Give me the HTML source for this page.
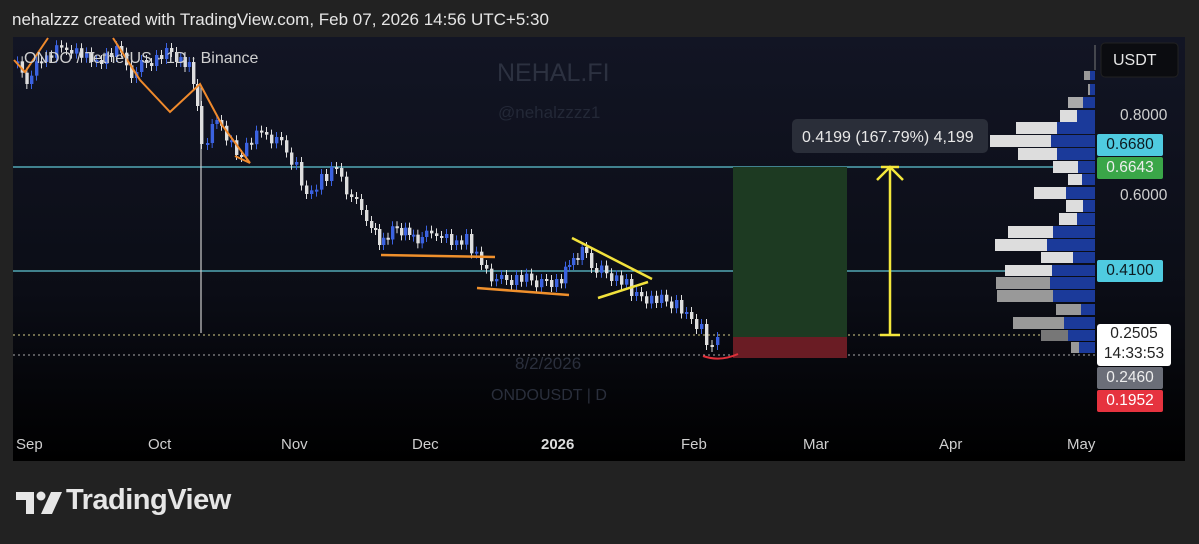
<!DOCTYPE html>
<html><head><meta charset="utf-8"><style>
body{margin:0;width:1199px;height:544px;background:#222222;overflow:hidden;font-family:"Liberation Sans",sans-serif;position:relative}
.hdr{position:absolute;left:12px;top:10px;color:#e6e6e6;font-size:17px}
.chart{position:absolute;left:13px;top:37px;width:1172px;height:424px;background:linear-gradient(#121524 0%,#0b0d16 60%,#000 100%)}
.t{position:absolute;font-size:15px;color:#cfcfcf;top:436px}
.lbl{position:absolute;left:1097px;width:66px;height:22px;font-size:15.5px;line-height:22px;text-align:center;border-radius:2px}
</style></head><body>
<div class="hdr">nehalzzz created with TradingView.com, Feb 07, 2026 14:56 UTC+5:30</div>
<div class="chart"></div>
<svg width="1199" height="544" style="position:absolute;left:0;top:0">
<text x="497" y="81" font-size="25" fill="#2c3140" font-family="Liberation Sans">NEHAL.FI</text>
<text x="498" y="118" font-size="17" fill="#232837" font-family="Liberation Sans">@nehalzzzz1</text>
<text x="515" y="369" font-size="17" fill="#2a2f3c" font-family="Liberation Sans">8/2/2026</text>
<text x="491" y="400" font-size="16" fill="#2a2f3c" font-family="Liberation Sans">ONDOUSDT | D</text>
<line x1="13" y1="167" x2="1095" y2="167" stroke="#5fc6d4" stroke-width="1.3"/>
<line x1="13" y1="271" x2="1095" y2="271" stroke="#5fc6d4" stroke-width="1.3"/>
<line x1="13" y1="335" x2="1095" y2="335" stroke="#d8d08a" stroke-width="1" stroke-dasharray="2,3"/>
<line x1="13" y1="355" x2="1095" y2="355" stroke="#aaa" stroke-width="1" stroke-dasharray="2,3"/>
<line x1="201" y1="85" x2="201" y2="333" stroke="#ccc" stroke-width="1.2"/>
<rect x="733" y="167" width="114" height="170" fill="#1d3a22"/>
<rect x="733" y="337" width="114" height="21" fill="#6a1c24"/>
<g id="candles"></g>
<polyline points="14,60 25,72 48,38" fill="none" stroke="#f08a2c" stroke-width="2"/>
<polyline points="113,38 140,80 170,112 200,84 222,125 250,163 235,156" fill="none" stroke="#f08a2c" stroke-width="2"/>
<line x1="381" y1="255" x2="495" y2="257" stroke="#f0902c" stroke-width="2.5"/>
<line x1="477" y1="288" x2="569" y2="295" stroke="#f0902c" stroke-width="2.5"/>
<line x1="572" y1="238" x2="652" y2="279" stroke="#f2e23c" stroke-width="2.5"/>
<line x1="598" y1="298" x2="648" y2="282" stroke="#f2e23c" stroke-width="2.5"/>
<path d="M703 356 Q720 362 738 354" fill="none" stroke="#e0303a" stroke-width="2"/>
<g stroke="#f4e83c" stroke-width="2.5" fill="none"><line x1="890" y1="169" x2="890" y2="335"/><line x1="880" y1="335" x2="900" y2="335"/><polyline points="877,180 890,167 903,180"/><line x1="881" y1="167" x2="899" y2="167"/></g>
<rect x="792" y="119" width="196" height="34" rx="5" fill="#2a2e39"/>
<text x="802" y="142" font-size="16" fill="#e8e8e8" font-family="Liberation Sans">0.4199 (167.79%) 4,199</text>
<g id="vp"></g>
<line x1="1095" y1="45" x2="1095" y2="70" stroke="#777"/>
<rect x="1101" y="43" width="77" height="34" rx="4" fill="#0b0c10" stroke="#222"/>
<text x="1113" y="65" font-size="16" fill="#e6e6e6" font-family="Liberation Sans">USDT</text>
<text x="1120" y="120" font-size="15.5" fill="#cfcfcf" font-family="Liberation Sans">0.8000</text>
<text x="1120" y="200" font-size="15.5" fill="#cfcfcf" font-family="Liberation Sans">0.6000</text>
<text x="24" y="63" font-size="16" fill="#cfcfcf" font-family="Liberation Sans">ONDO / TetherUS · 1D · Binance</text>
</svg>
<div class="lbl" style="top:134px;background:#4fcbe0;color:#0c1a20">0.6680</div>
<div class="lbl" style="top:157px;background:#3aa648;color:#eee">0.6643</div>
<div class="lbl" style="top:260px;background:#4fcbe0;color:#0c1a20">0.4100</div>
<div class="lbl" style="top:324px;height:42px;width:74px;background:#fff;color:#222;line-height:20px;border-radius:3px">0.2505<br>14:33:53</div>
<div class="lbl" style="top:367px;background:#6b6e78;color:#eee">0.2460</div>
<div class="lbl" style="top:390px;background:#e6333f;color:#fff">0.1952</div>
<div class="t" style="left:16px">Sep</div><div class="t" style="left:148px">Oct</div><div class="t" style="left:281px">Nov</div><div class="t" style="left:412px">Dec</div><div class="t" style="left:541px;font-weight:bold;color:#ddd">2026</div><div class="t" style="left:681px">Feb</div><div class="t" style="left:803px">Mar</div><div class="t" style="left:939px">Apr</div><div class="t" style="left:1067px">May</div>
<svg width="50" height="30" style="position:absolute;left:14px;top:488px"><path d="M2 4h18v22h-8V12H2z" fill="#e6e6e6"/><circle cx="27" cy="8" r="4.5" fill="#e6e6e6"/><path d="M37 4h11l-10 22h-11z" fill="#e6e6e6"/></svg>
<div style="position:absolute;left:66px;top:484px;font-size:29px;font-weight:bold;color:#e6e6e6;letter-spacing:-0.5px">TradingView</div>
<script>
(function(){
var pts=[[16,62],[30,78],[45,62],[70,44],[95,62],[120,52],[135,72],[155,60],[175,52],[192,68],[200,100],[206,150],[220,120],[240,155],[265,132],[280,140],[300,165],[310,200],[325,180],[340,165],[355,200],[370,215],[382,245],[400,228],[412,232],[425,240],[440,230],[455,245],[470,240],[485,262],[500,282],[520,278],[545,282],[560,285],[572,262],[585,250],[595,268],[615,275],[630,285],[640,295],[660,300],[680,303],[690,318],[705,330],[716,348],[722,337]];
var s='',prev=pts[0][1];
for(var i=0;i<pts.length-1;i++){var a=pts[i],b=pts[i+1];var n=Math.max(1,Math.round((b[0]-a[0])/4.6));for(var k=0;k<n;k++){var x=a[0]+(b[0]-a[0])*k/n;var c=a[1]+(b[1]-a[1])*(k+1)/n+((k*7+i*3)%5-2)*3;if(c<40)c=40;var up=c<prev;var ty=Math.min(c,prev),h=Math.max(2,Math.abs(c-prev));var col=up?'#3b62e0':'#dedede';s+='<line x1="'+(x+1.5)+'" y1="'+Math.max(38,ty-5)+'" x2="'+(x+1.5)+'" y2="'+(ty+h+5)+'" stroke="'+col+'" stroke-width="1"/><rect x="'+x+'" y="'+ty+'" width="3.4" height="'+h+'" fill="'+col+'"/>';prev=c;}}
document.getElementById('candles').innerHTML=s;
var r=[[71,9,1084,'#999'],[84,11,1088,'#999'],[97,11,1068,'#aaa',1083],[110,12,1060,'#ddd',1077],[122,12,1016,'#ddd',1057],[135,12,990,'#ddd',1051],[148,12,1018,'#ddd',1057],[161,12,1053,'#ddd',1078],[174,11,1068,'#ddd',1082],[187,12,1034,'#ddd',1066],[200,12,1066,'#ddd',1083],[213,12,1059,'#ddd',1077],[226,12,1008,'#ddd',1053],[239,12,995,'#ddd',1047],[252,11,1041,'#ddd',1073],[265,11,1005,'#ddd',1052],[277,12,996,'#999',1050],[290,12,997,'#999',1053],[304,11,1056,'#999',1081],[317,12,1013,'#999',1064],[330,11,1041,'#777',1068],[342,11,1071,'#999',1079]];
var v='';r.forEach(function(q){var e=q[4]||1090;v+='<rect x="'+q[2]+'" y="'+q[0]+'" width="'+(e-q[2])+'" height="'+q[1]+'" fill="'+q[3]+'"/>';v+='<rect x="'+e+'" y="'+q[0]+'" width="'+(1095-e)+'" height="'+q[1]+'" fill="#1b3a9a"/>';});
document.getElementById('vp').innerHTML=v;
})();
</script>
</body></html>
